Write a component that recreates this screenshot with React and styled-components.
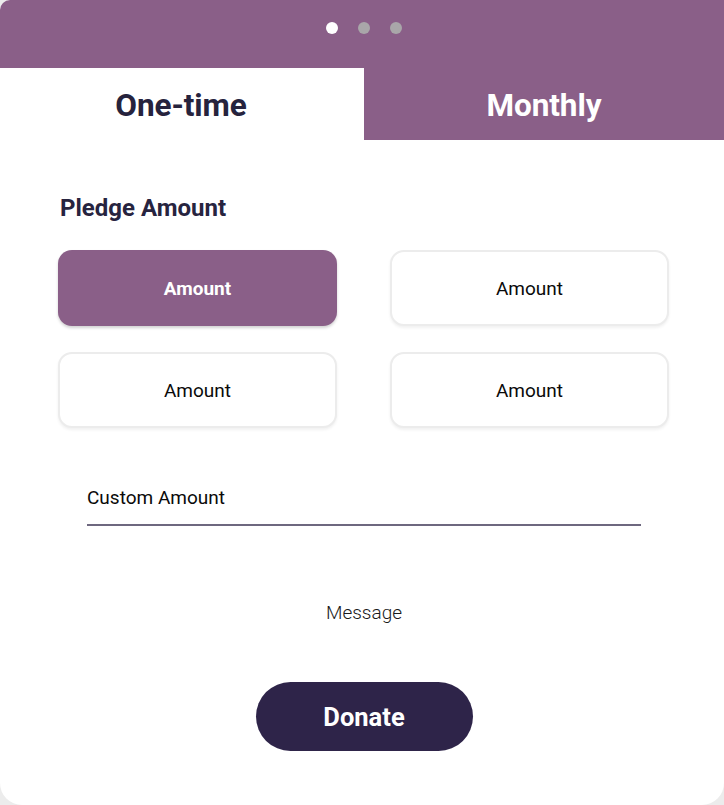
import React, { useState } from "react";
import styled, { createGlobalStyle } from "styled-components";

const Global = createGlobalStyle`
  html, body { margin: 0; padding: 0; background: #ececec; }
  body { font-family: Roboto, "Noto Sans", Arial, sans-serif; }
  * { box-sizing: border-box; }
`;

const Card = styled.div`
  width: 724px;
  height: 805px;
  background: #fff;
  border-radius: 10px 0 22px 22px;
  overflow: hidden;
  display: flex;
  flex-direction: column;
`;

const Header = styled.div`
  height: 68px;
  background: #8a5f88;
  display: flex;
  justify-content: center;
  align-items: flex-start;
  padding-top: 22px;
  padding-left: 4px;
  gap: 20px;
`;

const Dot = styled.span`
  width: 12px;
  height: 12px;
  border-radius: 50%;
  background: ${(p) => (p.$active ? "#ffffff" : "#a9a6a9")};
`;

const Tabs = styled.div`
  display: grid;
  grid-template-columns: 364px 1fr;
  height: 72px;
`;

const Tab = styled.div`
  display: flex;
  align-items: center;
  justify-content: center;
  font-size: 31.5px;
  font-weight: 700;
  letter-spacing: -0.1px;
  background: ${(p) => (p.$active ? "#ffffff" : "#8a5f88")};
  color: ${(p) => (p.$active ? "#26233d" : "#ffffff")};
  padding-top: 2px;
  padding-right: ${(p) => (p.$active ? "2px" : "0")};
`;

const Body = styled.div`
  display: flex;
  flex-direction: column;
  padding: 56px 56px 0 58px;
`;

const Title = styled.h2`
  margin: 0 0 0 2px;
  font-size: 24px;
  font-weight: 700;
  color: #27243f;
  line-height: 25px;
`;

const Grid = styled.div`
  display: grid;
  grid-template-columns: 279px 279px;
  column-gap: 53px;
  row-gap: 26px;
  margin-top: 29px;
`;

const AmountBtn = styled.button`
  height: 76px;
  border-radius: 14px;
  font-family: inherit;
  font-size: 19px;
  cursor: pointer;
  background: ${(p) => (p.$selected ? "#8a5f88" : "#ffffff")};
  color: ${(p) => (p.$selected ? "#ffffff" : "#0a0a0a")};
  font-weight: ${(p) => (p.$selected ? 700 : 400)};
  border: ${(p) => (p.$selected ? "none" : "2px solid #ececec")};
  box-shadow: ${(p) =>
    p.$selected ? "0 2px 3px rgba(0,0,0,0.18)" : "0 2px 3px rgba(0,0,0,0.06)"};
`;

const Custom = styled.div`
  margin: 59px 27px 0 29px;
  padding-bottom: 15px;
  border-bottom: 2px solid #6e687f;
  font-size: 19px;
  color: #0a0a0a;
  line-height: 22px;
`;

const Message = styled.div`
  margin-top: 76px;
  text-align: center;
  font-size: 19px;
  font-weight: 300;
  color: #1a1a1a;
  line-height: 22px;
  padding-left: 2px;
`;

const Donate = styled.button`
  align-self: center;
  margin-top: 58px;
  margin-left: 2px;
  width: 217px;
  height: 69px;
  border-radius: 35px;
  border: none;
  background: #2e2449;
  color: #fff;
  font-family: inherit;
  font-size: 25.5px;
  font-weight: 700;
  cursor: pointer;
`;

export default function App() {
  const [sel, setSel] = useState(0);
  const [tab, setTab] = useState(0);
  return (
    <>
      <Global />
      <Card>
        <Header>
          <Dot $active />
          <Dot />
          <Dot />
        </Header>
        <Tabs>
          <Tab $active={tab === 0} onClick={() => setTab(0)}>One-time</Tab>
          <Tab $active={tab === 1} onClick={() => setTab(1)}>Monthly</Tab>
        </Tabs>
        <Body>
          <Title>Pledge Amount</Title>
          <Grid>
            {[0, 1, 2, 3].map((i) => (
              <AmountBtn key={i} $selected={sel === i} onClick={() => setSel(i)}>
                Amount
              </AmountBtn>
            ))}
          </Grid>
          <Custom>Custom Amount</Custom>
          <Message>Message</Message>
          <Donate>Donate</Donate>
        </Body>
      </Card>
    </>
  );
}
